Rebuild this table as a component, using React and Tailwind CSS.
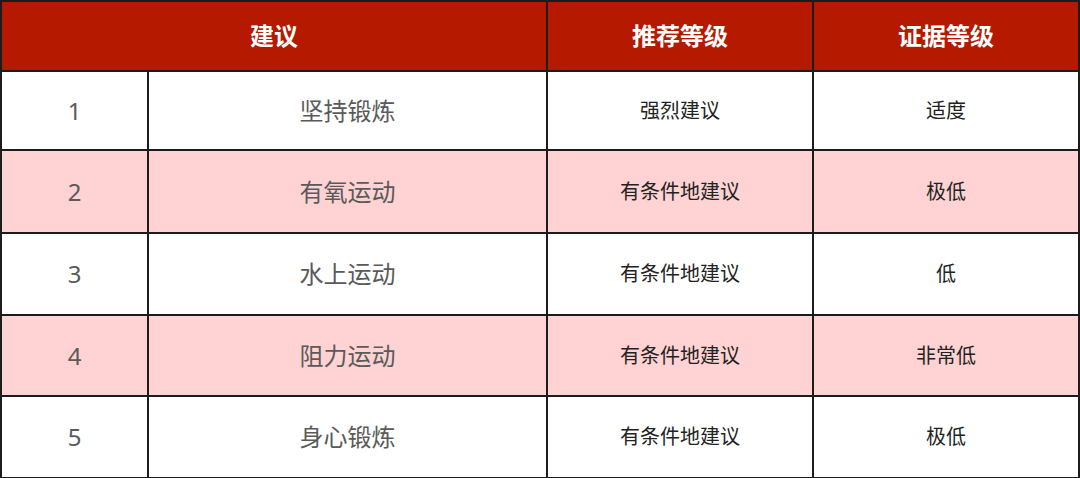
const rows = [
  { no: '1', name: '坚持锻炼', grade: '强烈建议', evidence: '适度', h: 'h-[79px]' },
  { no: '2', name: '有氧运动', grade: '有条件地建议', evidence: '极低', h: 'h-[83px]' },
  { no: '3', name: '水上运动', grade: '有条件地建议', evidence: '低', h: 'h-[82px]' },
  { no: '4', name: '阻力运动', grade: '有条件地建议', evidence: '非常低', h: 'h-[81px]' },
  { no: '5', name: '身心锻炼', grade: '有条件地建议', evidence: '极低', h: 'h-[82px]' },
];

export default function App() {
  const cell = 'border-2 border-[#1c1c1c] text-center align-middle p-0';

  return (
    <div
      className="w-[1080px] h-[478px] bg-white"
      style={{ fontFamily: '"Noto Sans", "Noto Sans CJK SC", sans-serif' }}
    >
      <table className="w-[1078px] border-collapse table-fixed">
        <colgroup>
          <col className="w-[147px]" />
          <col className="w-[399px]" />
          <col className="w-[266px]" />
          <col className="w-[266px]" />
        </colgroup>
        <thead>
          <tr className="h-[70px] bg-[#b51a00] text-white text-[24px] font-bold">
            <th colSpan={2} className={cell}>建议</th>
            <th className={cell}>推荐等级</th>
            <th className={cell}>证据等级</th>
          </tr>
        </thead>
        <tbody>
          {rows.map((row, i) => (
            <tr
              key={row.no}
              className={`${row.h} ${i % 2 === 1 ? 'bg-[#ffd3d3]' : 'bg-white'}`}
            >
              <td className={`${cell} text-[24px] text-[#5a5a5a]`}>{row.no}</td>
              <td className={`${cell} text-[24px] text-[#5a5a5a]`}>{row.name}</td>
              <td className={`${cell} text-[20px] text-[#222]`}>{row.grade}</td>
              <td className={`${cell} text-[20px] text-[#222]`}>{row.evidence}</td>
            </tr>
          ))}
        </tbody>
      </table>
    </div>
  );
}
